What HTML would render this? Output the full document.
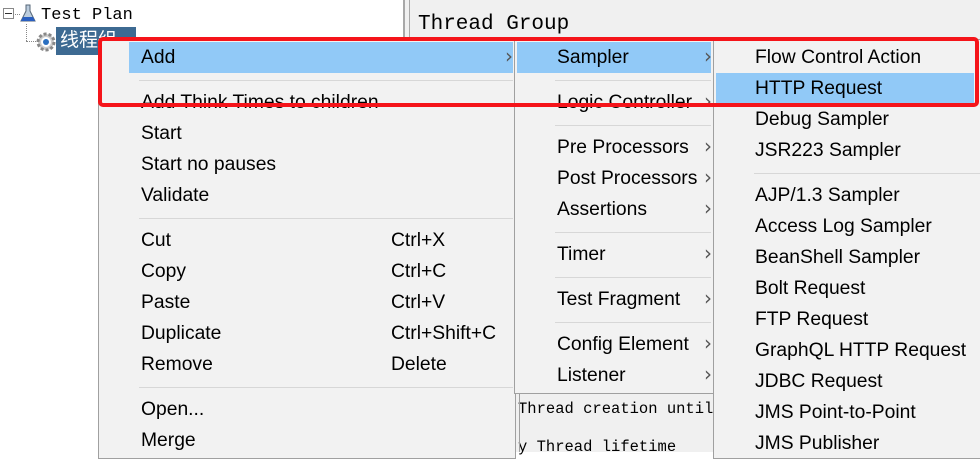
<!DOCTYPE html>
<html><head><meta charset="utf-8"><style>
*{margin:0;padding:0;box-sizing:border-box}
body{width:980px;height:452px;overflow:hidden;background:#fff;position:relative;font-family:"Liberation Sans","Noto Sans CJK SC",sans-serif}
.mono{font-family:"Liberation Mono","Noto Sans CJK SC",monospace}
.abs{position:absolute}
.menu{position:absolute;background:#f2f2f2;border:1px solid #a0a0a0}
.it{position:absolute;left:0;right:0;height:31px;line-height:31px;font-size:19.3px;color:#000;white-space:nowrap}
.hl{background:#91c9f7}
.sep{position:absolute;height:1px;background:#d7d7d7}
.arr{position:absolute;font-size:20px;color:#555;font-family:"DejaVu Sans",sans-serif}
</style></head><body>
<div class="abs" style="left:0;top:0;width:404px;height:452px;background:#fff"></div>
<div class="abs" style="left:3px;top:8px;width:11px;height:11px;border:1px solid #888;background:#fff"></div>
<div class="abs" style="left:5px;top:13px;width:7px;height:1px;background:#333"></div>
<div class="abs" style="left:15px;top:14px;width:5px;border-top:1px dotted #888"></div>
<svg class="abs" style="left:20px;top:3px" width="16" height="20"><path d="M6 2h4v6l5 10H1l5-10z" fill="#bcd" stroke="#567" stroke-width="1"/><path d="M3 14h10l2 4H1z" fill="#2a5fc0"/></svg>
<div class="abs mono" style="left:41px;top:6px;font-size:17px;color:#000">Test Plan</div>
<div class="abs" style="left:26px;top:24px;height:17px;border-left:1px dotted #888"></div>
<div class="abs" style="left:26px;top:41px;width:12px;border-top:1px dotted #888"></div>
<svg class="abs" style="left:36px;top:32px" width="20" height="20"><circle cx="10" cy="10" r="8" fill="#ccc" stroke="#888" stroke-dasharray="3 2" stroke-width="3"/><circle cx="10" cy="10" r="5" fill="#fff"/><circle cx="10" cy="10" r="3" fill="#2a6fc0"/></svg>
<div class="abs" style="left:56px;top:27px;width:80px;height:28px;background:#3d6a92;color:#fff;font-size:19px;line-height:28px;padding-left:4px">线程组</div>
<div class="abs" style="left:403px;top:0;width:2px;height:452px;background:#a8a8a8"></div>
<div class="abs" style="left:405px;top:0;width:4px;height:452px;background:#f0f0f0"></div>
<div class="abs" style="left:409px;top:0;width:1px;height:452px;background:#a8a8a8"></div>
<div class="abs" style="left:410px;top:0;width:570px;height:452px;background:#f0f0f0"></div>
<div class="abs mono" style="left:418px;top:13px;font-size:21px;color:#000">Thread Group</div>
<div class="abs mono" style="left:518px;top:400px;font-size:15.5px;color:#000">Thread creation until</div>
<div class="abs mono" style="left:518px;top:438px;font-size:15.5px;color:#000">y Thread lifetime</div>
<div class="abs" style="left:519px;top:393px;width:1px;height:59px;background:#a0a0a0"></div>

<div class="menu" style="left:98px;top:39px;width:418px;height:420px">
 <div class="it hl" style="top:2px;left:30px;right:2px"></div>
 <div class="it" style="top:2px;padding-left:42px">Add</div><div class="arr" style="left:406px;top:4px">›</div>
 <div class="sep" style="top:40px;left:40px;right:2px"></div>
 <div class="it" style="top:47px;padding-left:42px">Add Think Times to children</div>
 <div class="it" style="top:78px;padding-left:42px">Start</div>
 <div class="it" style="top:109px;padding-left:42px">Start no pauses</div>
 <div class="it" style="top:140px;padding-left:42px">Validate</div>
 <div class="sep" style="top:178px;left:40px;right:2px"></div>
 <div class="it" style="top:185px;padding-left:42px">Cut</div><div class="it" style="top:185px;left:292px">Ctrl+X</div>
 <div class="it" style="top:216px;padding-left:42px">Copy</div><div class="it" style="top:216px;left:292px">Ctrl+C</div>
 <div class="it" style="top:247px;padding-left:42px">Paste</div><div class="it" style="top:247px;left:292px">Ctrl+V</div>
 <div class="it" style="top:278px;padding-left:42px">Duplicate</div><div class="it" style="top:278px;left:292px">Ctrl+Shift+C</div>
 <div class="it" style="top:309px;padding-left:42px">Remove</div><div class="it" style="top:309px;left:292px">Delete</div>
 <div class="sep" style="top:347px;left:40px;right:2px"></div>
 <div class="it" style="top:354px;padding-left:42px">Open...</div>
 <div class="it" style="top:385px;padding-left:42px">Merge</div>
</div>

<div class="menu" style="left:514px;top:39px;width:200px;height:355px">
 <div class="it hl" style="top:2px;left:2px;right:2px"></div>
 <div class="it" style="top:2px;left:42px">Sampler</div><div class="arr" style="left:189px;top:4px">›</div>
 <div class="sep" style="top:40px;left:40px;right:2px"></div>
 <div class="it" style="top:47px;left:42px">Logic Controller</div><div class="arr" style="left:189px;top:49px">›</div>
 <div class="sep" style="top:85px;left:40px;right:2px"></div>
 <div class="it" style="top:92px;left:42px">Pre Processors</div><div class="arr" style="left:189px;top:94px">›</div>
 <div class="it" style="top:123px;left:42px">Post Processors</div><div class="arr" style="left:189px;top:125px">›</div>
 <div class="it" style="top:154px;left:42px">Assertions</div><div class="arr" style="left:189px;top:156px">›</div>
 <div class="sep" style="top:192px;left:40px;right:2px"></div>
 <div class="it" style="top:199px;left:42px">Timer</div><div class="arr" style="left:189px;top:201px">›</div>
 <div class="sep" style="top:237px;left:40px;right:2px"></div>
 <div class="it" style="top:244px;left:42px">Test Fragment</div><div class="arr" style="left:189px;top:246px">›</div>
 <div class="sep" style="top:282px;left:40px;right:2px"></div>
 <div class="it" style="top:289px;left:42px">Config Element</div><div class="arr" style="left:189px;top:291px">›</div>
 <div class="it" style="top:320px;left:42px">Listener</div><div class="arr" style="left:189px;top:322px">›</div>
</div>

<div class="menu" style="left:713px;top:39px;width:270px;height:420px">
 <div class="it" style="top:2px;left:41px">Flow Control Action</div>
 <div class="it hl" style="top:33px;left:2px;right:8px"></div>
 <div class="it" style="top:33px;left:41px">HTTP Request</div>
 <div class="it" style="top:64px;left:41px">Debug Sampler</div>
 <div class="it" style="top:95px;left:41px">JSR223 Sampler</div>
 <div class="sep" style="top:133px;left:40px;right:2px"></div>
 <div class="it" style="top:140px;left:41px">AJP/1.3 Sampler</div>
 <div class="it" style="top:171px;left:41px">Access Log Sampler</div>
 <div class="it" style="top:202px;left:41px">BeanShell Sampler</div>
 <div class="it" style="top:233px;left:41px">Bolt Request</div>
 <div class="it" style="top:264px;left:41px">FTP Request</div>
 <div class="it" style="top:295px;left:41px">GraphQL HTTP Request</div>
 <div class="it" style="top:326px;left:41px">JDBC Request</div>
 <div class="it" style="top:357px;left:41px">JMS Point-to-Point</div>
 <div class="it" style="top:388px;left:41px">JMS Publisher</div>
</div>

<div class="abs" style="left:98px;top:37px;width:881px;height:70px;border:4px solid #f5141a;border-radius:5px"></div>
</body></html>
